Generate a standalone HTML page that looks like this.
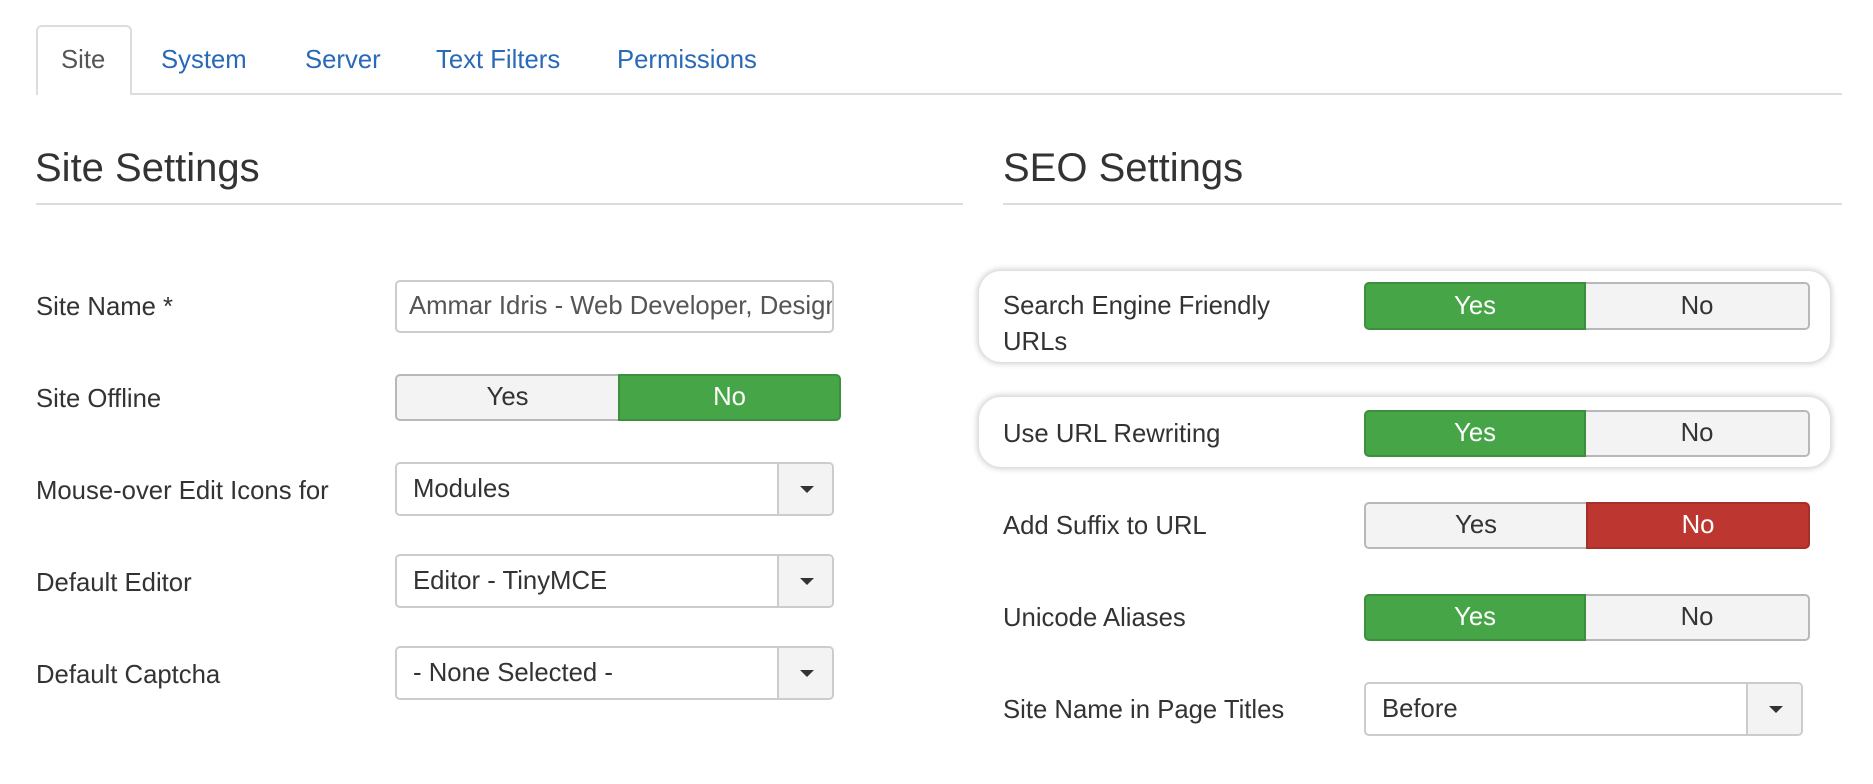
<!DOCTYPE html>
<html><head><meta charset="utf-8"><style>
*{box-sizing:border-box;margin:0;padding:0}
body{width:1873px;height:784px;background:#fff;font-family:"Liberation Sans",Arial,sans-serif;color:#333;position:relative;overflow:hidden}
.a{position:absolute}
.tab{position:absolute;top:61px;transform:translateY(-50%);font-size:25.7px;color:#2a69b8;line-height:1}
.h{position:absolute;font-size:40px;color:#333;line-height:1}
.lbl{position:absolute;left:36px;font-size:25.7px;line-height:36px;transform:translateY(-50%)}
.rl{left:1003px}
.inp{position:absolute;border:2px solid #ccc;border-radius:5px;background:#fff;font-size:25.7px;color:#555;padding-left:12px;display:flex;align-items:center;overflow:hidden;white-space:nowrap}
.sel{position:absolute;border:2px solid #ccc;border-radius:5px;background:#fff;font-size:25.7px;color:#333;padding-left:16px;display:flex;align-items:center}
.sel .c{position:absolute;right:0;top:0;bottom:0;width:55px;border-left:2px solid #ccc;background:#f3f3f3;border-radius:0 4px 4px 0}
.sel .c:after{content:"";position:absolute;left:21px;top:50%;margin-top:-3px;border-left:7px solid transparent;border-right:7px solid transparent;border-top:7px solid #333}
.tg{position:absolute;display:flex;font-size:25.7px}
.tg div{display:flex;align-items:center;justify-content:center;height:100%}
.off{background:#f3f3f3;color:#333;border:2px solid #b8b8b8}
.g{background:#46a546;color:#fff;border:2px solid #3c8f3c}
.r{background:#bd362f;color:#fff;border:2px solid #a52f29}
.box{position:absolute;background:#fff;border-radius:22px;box-shadow:0 0 6px 2px rgba(0,0,0,.18)}
</style></head><body>
<div class="a" style="left:36px;top:93px;width:1806px;height:2px;background:#ddd"></div>
<div class="a" style="left:36px;top:25px;width:96px;height:70px;border:2px solid #ddd;border-bottom:none;border-radius:6px 6px 0 0;background:#fff"></div>
<div class="tab" style="left:61px;color:#555">Site</div>
<div class="tab" style="left:161px">System</div>
<div class="tab" style="left:305px">Server</div>
<div class="tab" style="left:436px">Text Filters</div>
<div class="tab" style="left:617px">Permissions</div>

<div class="h" style="left:35px;top:148px">Site Settings</div>
<div class="a" style="left:36px;top:203px;width:927px;height:2px;background:#ddd"></div>
<div class="h" style="left:1003px;top:148px">SEO Settings</div>
<div class="a" style="left:1003px;top:203px;width:839px;height:2px;background:#ddd"></div>

<div class="lbl" style="top:307px">Site Name *</div>
<div class="inp" style="left:395px;top:280px;width:439px;height:53px">Ammar Idris - Web Developer, Designer</div>
<div class="lbl" style="top:399px">Site Offline</div>
<div class="tg" style="left:395px;top:374px;width:446px;height:47px"><div class="off" style="width:223px;border-radius:5px 0 0 5px;border-right:none">Yes</div><div class="g" style="width:223px;border-radius:0 5px 5px 0">No</div></div>
<div class="lbl" style="top:491px">Mouse-over Edit Icons for</div>
<div class="sel" style="left:395px;top:462px;width:439px;height:54px">Modules<span class="c"></span></div>
<div class="lbl" style="top:583px">Default Editor</div>
<div class="sel" style="left:395px;top:554px;width:439px;height:54px">Editor - TinyMCE<span class="c"></span></div>
<div class="lbl" style="top:675px">Default Captcha</div>
<div class="sel" style="left:395px;top:646px;width:439px;height:54px">- None Selected -<span class="c"></span></div>

<div class="box" style="left:979px;top:271px;width:851px;height:91px"></div>
<div class="box" style="left:979px;top:397px;width:851px;height:70px"></div>
<div class="lbl rl" style="top:324px">Search Engine Friendly<br>URLs</div>
<div class="tg" style="left:1364px;top:282px;width:446px;height:48px"><div class="g" style="width:222px;border-radius:5px 0 0 5px">Yes</div><div class="off" style="width:224px;border-radius:0 5px 5px 0;border-left:none">No</div></div>
<div class="lbl rl" style="top:434px">Use URL Rewriting</div>
<div class="tg" style="left:1364px;top:410px;width:446px;height:47px"><div class="g" style="width:222px;border-radius:5px 0 0 5px">Yes</div><div class="off" style="width:224px;border-radius:0 5px 5px 0;border-left:none">No</div></div>
<div class="lbl rl" style="top:526px">Add Suffix to URL</div>
<div class="tg" style="left:1364px;top:502px;width:446px;height:47px"><div class="off" style="width:222px;border-radius:5px 0 0 5px;border-right:none">Yes</div><div class="r" style="width:224px;border-radius:0 5px 5px 0">No</div></div>
<div class="lbl rl" style="top:618px">Unicode Aliases</div>
<div class="tg" style="left:1364px;top:594px;width:446px;height:47px"><div class="g" style="width:222px;border-radius:5px 0 0 5px">Yes</div><div class="off" style="width:224px;border-radius:0 5px 5px 0;border-left:none">No</div></div>
<div class="lbl rl" style="top:710px">Site Name in Page Titles</div>
<div class="sel" style="left:1364px;top:682px;width:439px;height:54px">Before<span class="c"></span></div>
</body></html>
